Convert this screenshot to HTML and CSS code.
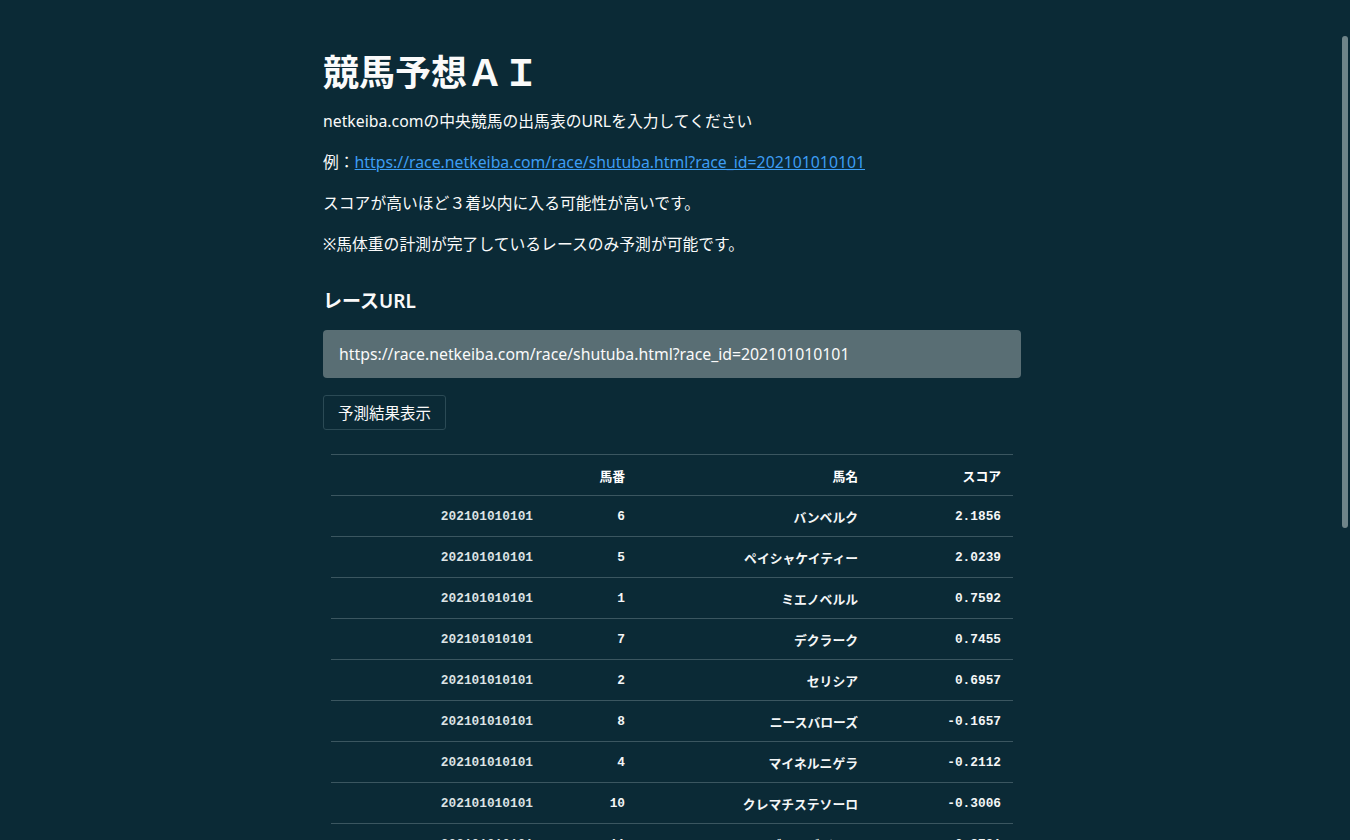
FILE: index.html
```html
<!DOCTYPE html>
<html lang="ja">
<head>
<meta charset="utf-8">
<title>競馬予想AI</title>
<link rel="stylesheet" href="styles.css">
</head>
<body>
<div class="app">
  <main class="block">
    <h1 class="title">競馬予想ＡＩ</h1>
    <p class="text">netkeiba.comの中央競馬の出馬表のURLを入力してください</p>
    <p class="text">例：<a class="link" href="#">https://race.netkeiba.com/race/shutuba.html?race_id=202101010101</a></p>
    <p class="text">スコアが高いほど３着以内に入る可能性が高いです。</p>
    <p class="text">※馬体重の計測が完了しているレースのみ予測が可能です。</p>
    <h3 class="label">レースURL</h3>
    <div class="input">https://race.netkeiba.com/race/shutuba.html?race_id=202101010101</div>
    <button class="btn">予測結果表示</button>
    <table class="tbl">
      <thead>
        <tr><th></th><th>馬番</th><th>馬名</th><th>スコア</th></tr>
      </thead>
      <tbody>
        <tr><th>202101010101</th><td>6</td><td>バンベルク</td><td>2.1856</td></tr>
        <tr><th>202101010101</th><td>5</td><td>ペイシャケイティー</td><td>2.0239</td></tr>
        <tr><th>202101010101</th><td>1</td><td>ミエノベルル</td><td>0.7592</td></tr>
        <tr><th>202101010101</th><td>7</td><td>デクラーク</td><td>0.7455</td></tr>
        <tr><th>202101010101</th><td>2</td><td>セリシア</td><td>0.6957</td></tr>
        <tr><th>202101010101</th><td>8</td><td>ニースバローズ</td><td>-0.1657</td></tr>
        <tr><th>202101010101</th><td>4</td><td>マイネルニゲラ</td><td>-0.2112</td></tr>
        <tr><th>202101010101</th><td>10</td><td>クレマチステソーロ</td><td>-0.3006</td></tr>
        <tr><th>202101010101</th><td>11</td><td>ブレイズザイル</td><td>-0.3791</td></tr>
      </tbody>
    </table>
  </main>
</div>
<div class="scroll-thumb"></div>
</body>
</html>
```

FILE: styles.css
```css
html, body {
  margin: 0;
  padding: 0;
  height: 100%;
  overflow: hidden;
}
body {
  background: #0b2a36;
  color: #fafafa;
  font-family: "Noto Sans", "Noto Sans CJK JP", sans-serif;
}
.app {
  display: flex;
  justify-content: center;
  margin-right: 6px;
}
.block {
  width: 698px;
  padding-top: 46px;
}
.title {
  margin: 0 0 9px 0;
  font-size: 36px;
  font-weight: 700;
  line-height: 54px;
}
.text {
  margin: 0 0 17px 0;
  font-size: 15.8px;
  line-height: 24px;
}
.link {
  color: #3d9df3;
  text-decoration: underline;
}
.label {
  margin: 30px 0 14px 0;
  font-size: 19px;
  font-weight: 600;
  line-height: 30px;
}
.input {
  height: 48px;
  box-sizing: border-box;
  background: #596e74;
  border-radius: 4px;
  padding: 0 16px;
  display: flex;
  align-items: center;
  font-size: 15.8px;
  color: #fafafa;
}
.btn {
  margin-top: 17px;
  display: block;
  height: 35px;
  padding: 0 14px;
  background: #0b2a36;
  color: #fafafa;
  border: 1px solid #2b4a55;
  border-radius: 3px;
  font-family: "Noto Sans", "Noto Sans CJK JP", sans-serif;
  font-size: 15.5px;
}
.tbl {
  margin: 24px 8px 0 8px;
  width: 682px;
  border-collapse: collapse;
  font-family: "Liberation Mono", "Noto Sans CJK JP", monospace;
  font-size: 12.8px;
  color: #fafafa;
}
.tbl tr {
  height: 41px;
  border-top: 1px solid #3b5660;
}
.tbl tbody tr:last-child {
  border-bottom: 1px solid #3b5660;
}
.tbl th, .tbl td {
  text-align: right;
  padding: 0 12px;
  white-space: nowrap;
  font-weight: 700;
}
.tbl thead th {
  color: #ffffff;
}
.tbl tbody th {
  color: #dde3e5;
}
.tbl td {
  color: #f4f6f7;
}
.tbl thead th:nth-child(1) { width: 190px; }
.tbl thead th:nth-child(2) { width: 68px; }
.tbl thead th:nth-child(3) { width: 209px; }
.scroll-thumb {
  position: fixed;
  right: 2px;
  top: 36px;
  width: 6px;
  height: 492px;
  background: #6f8489;
  border-radius: 3px;
}
```
